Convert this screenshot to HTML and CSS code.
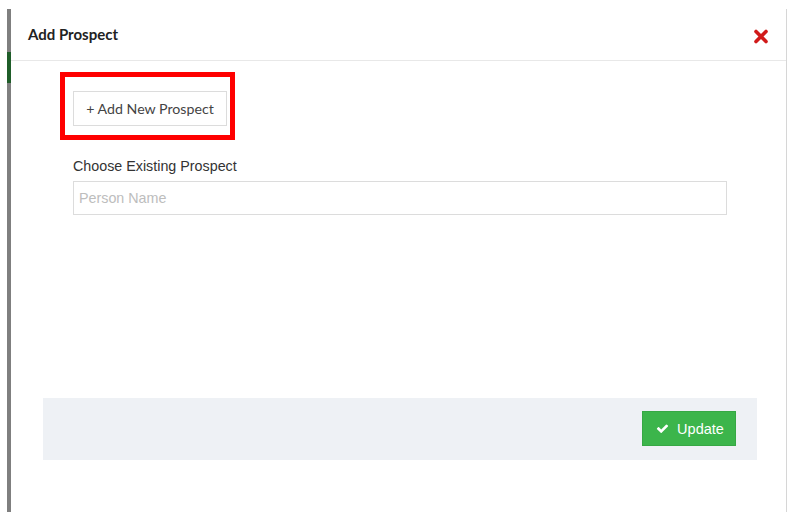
FILE: index.html
```html
<!DOCTYPE html>
<html>
<head>
<meta charset="utf-8">
<link rel="stylesheet" href="styles.css">
</head>
<body>
<div class="page">
  <div class="rail">
    <div class="rail-green"></div>
  </div>
  <div class="modal">
    <div class="modal-header">
      <h4 class="modal-title">Add Prospect</h4>
      <svg class="close" width="14" height="15" viewBox="0 0 14 15">
        <line x1="2" y1="2.5" x2="12" y2="12.5" stroke="#d11b1b" stroke-width="3.6" stroke-linecap="round"/>
        <line x1="12" y1="2.5" x2="2" y2="12.5" stroke="#d11b1b" stroke-width="3.6" stroke-linecap="round"/>
      </svg>
    </div>
    <div class="modal-body">
      <div class="add-wrap">
        <button class="btn-add">+ Add New Prospect</button>
        <div class="highlight"></div>
      </div>
      <label class="field-label">Choose Existing Prospect</label>
      <input class="field-input" type="text" placeholder="Person Name">
    </div>
    <div class="modal-footer">
      <button class="btn-update">
        <svg width="13" height="11" viewBox="0 0 1792 1500"><path fill="#fff" d="M1671 420q0 40-28 68l-724 724-136 136q-28 28-68 28t-68-28l-136-136-362-362q-28-28-28-68t28-68l136-136q28-28 68-28t68 28l294 295 656-657q28-28 68-28t68 28l136 136q28 28 28 68z"/></svg>
        <span>Update</span>
      </button>
    </div>
  </div>
</div>
</body>
</html>
```
FILE: styles.css
```css
* { box-sizing: border-box; }
html, body { margin: 0; padding: 0; background: #fff; }
body { width: 788px; height: 512px; overflow: hidden; font-family: "Liberation Sans", Arial, sans-serif; color: #333; }

.page {
  display: flex;
  height: 512px;
  padding-top: 9px;
}
.rail {
  width: 4px;
  margin-left: 7px;
  background: #7f7f7f;
  flex: none;
  padding-top: 43px;
}
.rail-green {
  height: 31px;
  background: #1f5d29;
}
.modal {
  flex: none;
  width: 776px;
  border-right: 1px solid #d6d6d6;
  display: flex;
  flex-direction: column;
}
.modal-header {
  height: 52px;
  border-bottom: 1px solid #e8e8e8;
  display: flex;
  align-items: flex-start;
  justify-content: space-between;
  padding: 16px 18px 0 17px;
}
.modal-title {
  margin: 0;
  font-family: Lato, "Liberation Sans", sans-serif;
  font-weight: 700;
  font-size: 15px;
  line-height: 18px;
  color: #222;
}
.close {
  margin-top: 4px;
}
.modal-body {
  padding: 30px 59px 0 62px;
  display: flex;
  flex-direction: column;
  align-items: flex-start;
}
.add-wrap {
  position: relative;
}
.btn-add {
  height: 35px;
  width: 154px;
  padding: 0;
  border: 1px solid #dcdcdc;
  background: #fff;
  font-family: Lato, "Liberation Sans", sans-serif;
  font-size: 14.2px;
  color: #444;
  display: block;
}
.highlight {
  position: absolute;
  left: -13px;
  top: -19px;
  width: 175px;
  height: 68px;
  border: 5px solid #ff0000;
}
.field-label {
  margin-top: 32px;
  font-size: 14.3px;
  line-height: 16px;
  color: #333;
}
.field-input {
  margin-top: 7px;
  width: 654px;
  height: 34px;
  border: 1px solid #dcdcdc;
  padding: 0 5px;
  font-family: "Liberation Sans", Arial, sans-serif;
  font-size: 14.3px;
  color: #333;
  outline: none;
}
.field-input::placeholder { color: #bdbdbd; }

.modal-footer {
  margin: 183px 29px 0 32px;
  height: 62px;
  background: #eef1f5;
  display: flex;
  justify-content: flex-end;
  align-items: flex-start;
  padding: 13px 21px 0 0;
}
.btn-update {
  width: 94px;
  height: 35px;
  background: #3cb54b;
  border: 1px solid #36a844;
  color: #fff;
  font-family: "Liberation Sans", Arial, sans-serif;
  font-size: 14.5px;
  display: flex;
  align-items: center;
  justify-content: center;
  gap: 8px;
  padding: 0 0 0 2px;
}
```
